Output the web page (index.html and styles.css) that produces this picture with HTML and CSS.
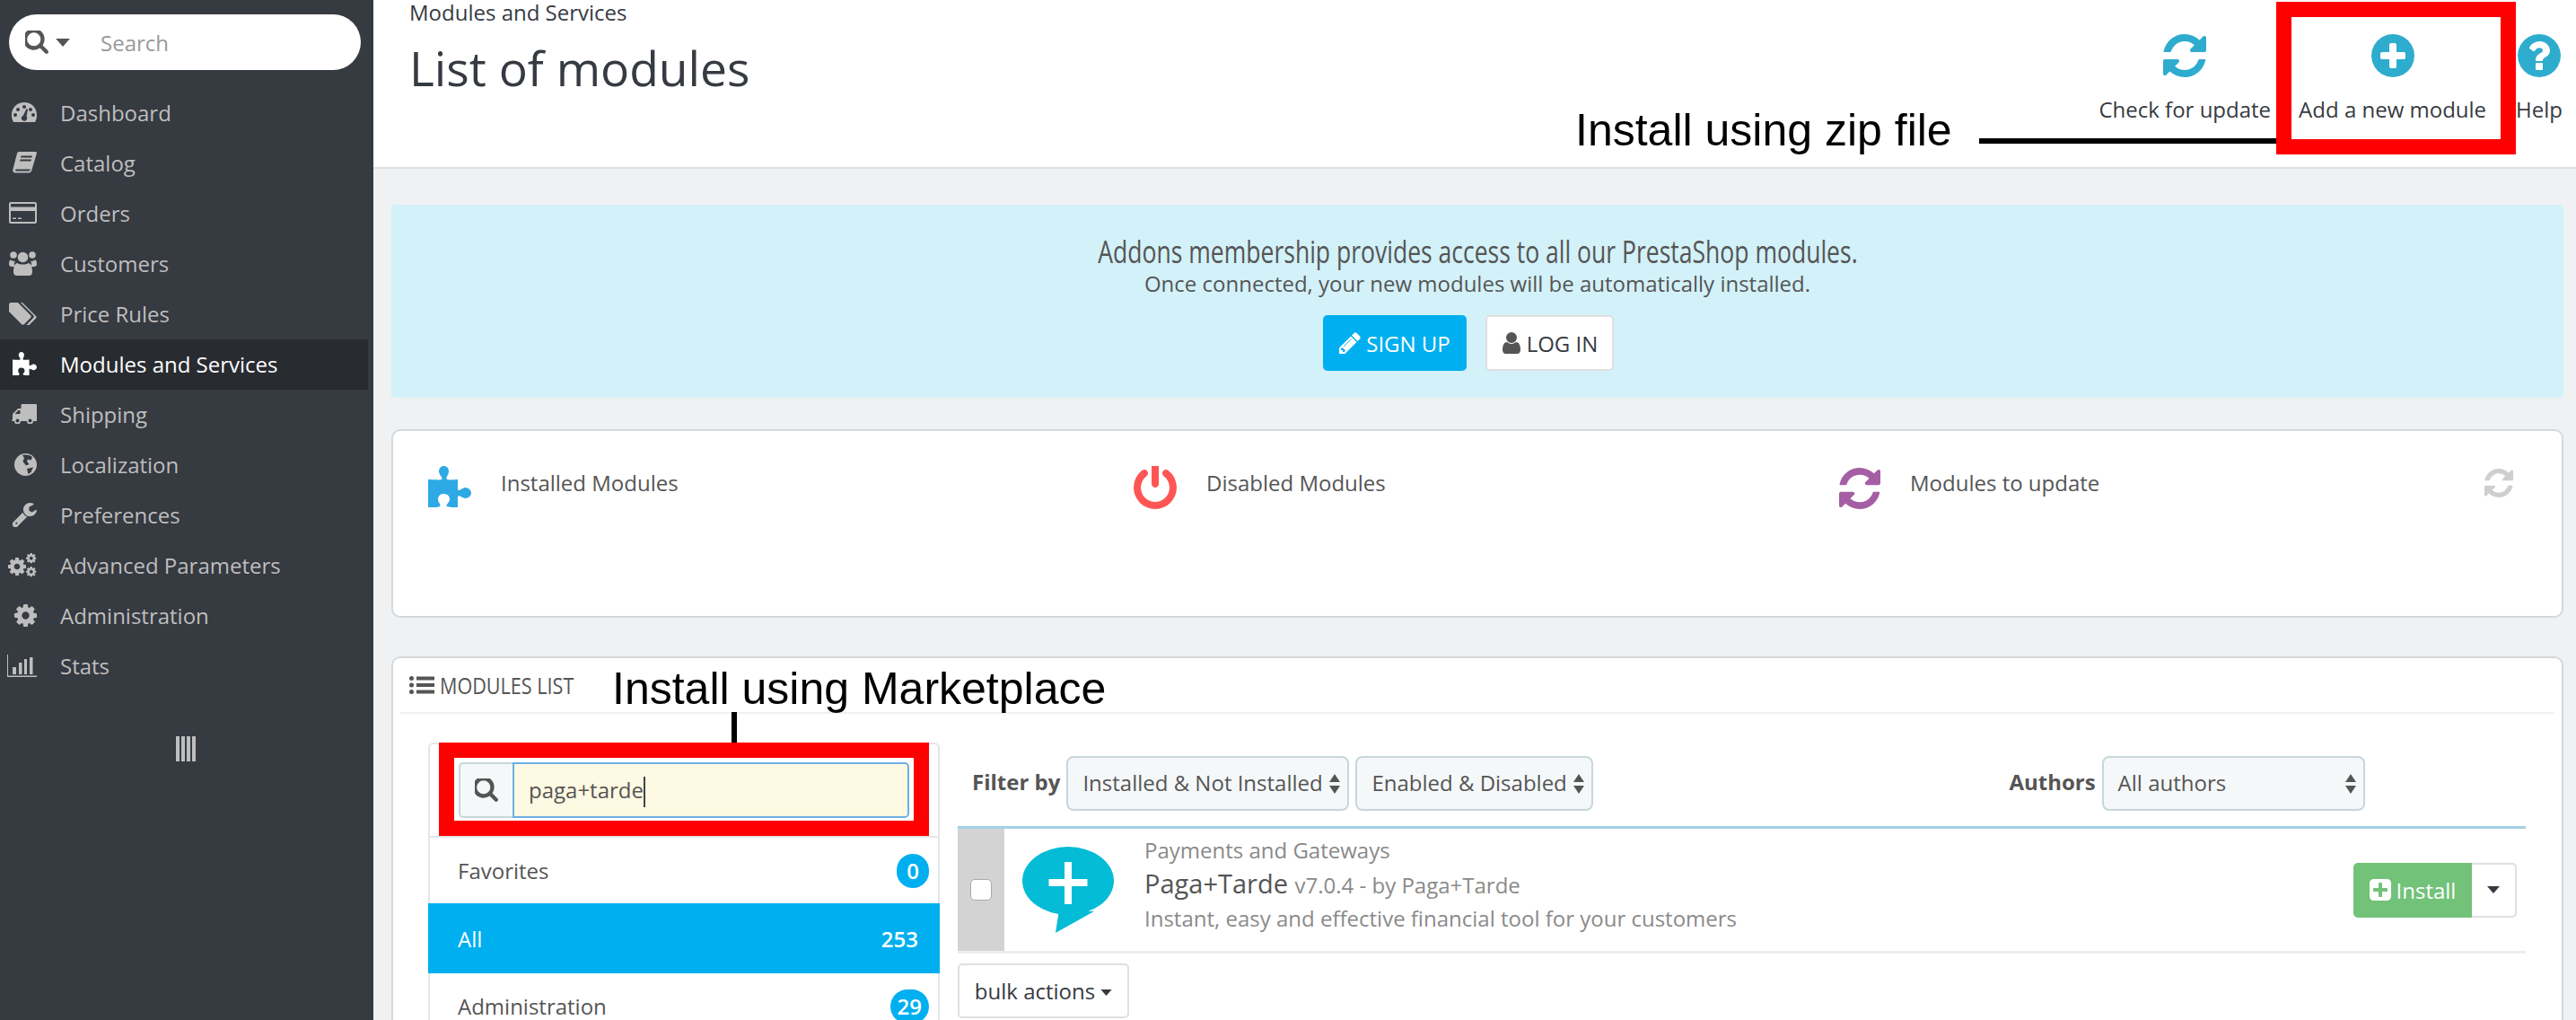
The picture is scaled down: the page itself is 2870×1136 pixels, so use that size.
FILE: index.html
```html
<!DOCTYPE html>
<html lang="en">
<head>
<meta charset="utf-8">
<title>List of modules</title>
<link rel="stylesheet" href="styles.css">
</head>
<body>
<svg class="sprite" aria-hidden="true">
  <symbol id="search" viewBox="128 128 1536 1536"><path d="M1152 704q0-185-131.500-316.500t-316.500-131.500-316.500 131.500-131.500 316.500 131.500 316.500 316.500 131.500 316.500-131.500 131.500-316.500zm512 832q0 52-38 90t-90 38q-54 0-90-38l-343-342q-179 124-399 124-143 0-273.500-55.500t-225-150-150-225-55.500-273.500 55.500-273.500 150-225 225-150 273.500-55.500 273.500 55.500 225 150 150 225 55.500 273.500q0 220-124 399l343 343q37 37 37 90z" transform="translate(0 0)"/></symbol>
  <symbol id="refresh" viewBox="128 128 1536 1536"><path d="M1639 1056q0 5-1 7-64 268-268 434.500t-478 166.500q-146 0-282.500-55t-243.500-157l-129 129q-19 19-45 19t-45-19-19-45v-448q0-26 19-45t45-19h448q26 0 45 19t19 45-19 45l-137 137q71 66 161 102t187 36q134 0 250-65t186-179q11-17 53-117 8-23 30-23h192q13 0 22.500 9.500t9.500 22.500zm25-800v448q0 26-19 45t-45 19h-448q-26 0-45-19t-19-45 19-45l138-138q-148-137-349-137-134 0-250 65t-186 179q-11 17-53 117-8 23-30 23h-199q-13 0-22.500-9.500t-9.500-22.500v-7q65-268 270-434.500t480-166.500q146 0 284 55.500t245 156.500l130-129q19-19 45-19t45 19 19 45z"/></symbol>
  <symbol id="plus-circle" viewBox="128 128 1536 1536"><path d="M1344 960v-128q0-26-19-45t-45-19h-256v-256q0-26-19-45t-45-19h-128q-26 0-45 19t-19 45v256h-256q-26 0-45 19t-19 45v128q0 26 19 45t45 19h256v256q0 26 19 45t45 19h128q26 0 45-19t19-45v-256h256q26 0 45-19t19-45zm320-64q0 209-103 385.500t-279.500 279.500-385.500 103-385.500-103-279.500-279.500-103-385.500 103-385.500 279.500-279.500 385.500-103 385.500 103 279.500 279.500 103 385.500z"/></symbol>
  <symbol id="question" viewBox="128 128 1536 1536"><path d="M1024 1376v-192q0-14-9-23t-23-9h-192q-14 0-23 9t-9 23v192q0 14 9 23t23 9h192q14 0 23-9t9-23zm256-672q0-88-55.500-163t-138.500-116-170-41q-243 0-371 213-15 24 8 42l132 100q7 6 19 6 16 0 25-12 53-68 86-92 34-24 86-24 48 0 85.500 26t37.500 59q0 38-20 61t-68 45q-63 28-115.500 86.500t-52.500 125.500v36q0 14 9 23t23 9h192q14 0 23-9t9-23q0-19 21.500-49.500t54.500-49.500q32-18 49-28.500t46-35 44.500-48 28-60.500 12.500-81zm384 192q0 209-103 385.500t-279.500 279.500-385.500 103-385.500-103-279.500-279.500-103-385.500 103-385.500 279.500-279.500 385.500-103 385.500 103 279.500 279.500 103 385.500z"/></symbol>
  <symbol id="puzzle" viewBox="0 0 48 46"><path d="M0 15C6 15 12 16 15 15C17 13 12 10 12 6C12 2 15 0 17.500 0C20 0 23 2 23 6C23 10 19 13 21 15C24 16 29 15 33 15V26C34 29 37 25 41 24C45 24 48 27 48 30C48 33 45 36 41 36C37 35 34 32 33 34V46C28 46 24 46 21 45C19 43 24 41 24 37C24 33 21 31 17 31C13 31 11 34 11 37C11 41 15 43 13 45C9 47 4 46 0 46Z"/></symbol>
  <symbol id="cog" viewBox="128 128 1536 1536"><path d="M1152 896q0-106-75-181t-181-75-181 75-75 181 75 181 181 75 181-75 75-181zm512-109v222q0 12-8 23t-20 13l-185 28q-19 54-39 91 35 50 107 138 10 12 10 25t-9 23q-27 37-99 108t-94 71q-12 0-26-9l-138-108q-44 23-91 38-16 136-29 186-7 28-36 28h-222q-14 0-24.500-8.500t-11.500-21.500l-28-184q-49-16-90-37l-141 107q-10 9-25 9-14 0-25-11-126-114-165-168-7-10-7-23 0-12 8-23 15-21 51-66.500t54-70.500q-27-50-41-99l-183-27q-13-2-21-12.500t-8-23.500v-222q0-12 8-23t19-13l186-28q14-46 39-92-40-57-107-138-10-12-10-24 0-10 9-23 26-36 98.500-107.500t94.500-71.500q13 0 26 10l138 107q44-23 91-38 16-136 29-186 7-28 36-28h222q14 0 24.500 8.500t11.500 21.500l28 184q49 16 90 37l142-107q9-9 24-9 13 0 25 10 129 119 165 170 7 8 7 22 0 12-8 23-15 21-51 66.500t-54 70.500q26 50 41 98l183 28q13 2 21 12.500t8 23.500z"/></symbol>
  <symbol id="cogs" viewBox="0 0 32 27"><use href="#cog" x="0" y="5" width="20" height="20"/><use href="#cog" x="20" y="0" width="11.500" height="11.500"/><use href="#cog" x="20" y="15" width="11.500" height="11.500"/></symbol>
  <symbol id="user" viewBox="256 128 1280 1536"><path d="M1536 1399q0 109-62.500 187t-150.500 78h-854q-88 0-150.500-78t-62.500-187q0-85 8.500-160.500t31.500-152 58.500-131 94-89 134.500-34.500q131 128 313 128t313-128q76 0 134.500 34.500t94 89 58.500 131 31.500 152 8.500 160.500zm-256-887q0 159-112.500 271.500t-271.500 112.500-271.500-112.500-112.500-271.500 112.500-271.500 271.500-112.500 271.500 112.500 112.500 271.500z"/></symbol>
  <symbol id="power" viewBox="128 128 1536 1536"><path d="M1664 896q0 156-61 298t-164 245-245 164-298 61-298-61-245-164-164-245-61-298q0-182 80.500-343t226.500-270q43-32 95.500-25t83.500 50q32 42 24.500 94.500t-49.500 84.500q-98 74-151.500 181t-53.500 228q0 104 40.500 198.500t109.500 163.500 163.500 109.500 198.500 40.500 198.500-40.500 163.500-109.500 109.500-163.500 40.500-198.500q0-121-53.500-228t-151.500-181q-42-32-49.500-84.500t24.500-94.500q31-43 84-50t95 25q146 109 226.500 270t80.500 343zm-640-768v640q0 52-38 90t-90 38-90-38-38-90v-640q0-52 38-90t90-38 90 38 38 90z"/></symbol>
  <symbol id="wrench" viewBox="128 128 1600 1600"><path d="M448 1472q0-26-19-45t-45-19-45 19-19 45 19 45 45 19 45-19 19-45zm644-420l-682 682q-37 37-90 37-52 0-91-37l-106-108q-38-36-38-90 0-53 38-91l681-681q39 98 114.500 173.500t173.500 114.500zm634-435q0 39-23 106-47 134-164.500 217.500t-258.500 83.500q-185 0-316.500-131.500t-131.500-316.500 131.500-316.500 316.500-131.500q58 0 121.500 16.500t107.500 46.500q16 11 16 28t-16 28l-293 169v224l193 107q5-3 79-48.500t135.500-81 70.500-35.500q15 0 23.500 10t8.500 25z"/></symbol>
  <symbol id="pencil" viewBox="128 128 1536 1536"><path d="M491 1536l91-91-235-235-91 91v107h128v128h107zm523-928q0-22-22-22-10 0-17 7l-542 542q-7 7-7 17 0 22 22 22 10 0 17-7l542-542q7-7 7-17zm-54-192l416 416-832 832h-416v-416zm683 96q0 53-37 90l-166 166-416-416 166-165q36-38 90-38 53 0 91 38l235 234q37 39 37 91z"/></symbol>
  <symbol id="plus-square" viewBox="128 128 1536 1536"><path d="M1408 960v-128q0-26-19-45t-45-19h-320v-320q0-26-19-45t-45-19h-128q-26 0-45 19t-19 45v320h-320q-26 0-45 19t-19 45v128q0 26 19 45t45 19h320v320q0 26 19 45t45 19h128q26 0 45-19t19-45v-320h320q26 0 45-19t19-45zm256-544v960q0 119-84.500 203.500t-203.500 84.500h-960q-119 0-203.500-84.500t-84.500-203.500v-960q0-119 84.500-203.500t203.500-84.500h960q119 0 203.500 84.500t84.500 203.500z"/></symbol>
  <symbol id="users" viewBox="0 0 31 28"><circle cx="5" cy="5" r="3.800"/><circle cx="26" cy="5" r="3.800"/><circle cx="15.500" cy="7.500" r="5.800"/><path d="M7 12C5 15 6 17 7 18H3C1 18 0 17 0 15C0 12 1 10 2 10.500C4 12 5.500 12 7 12ZM24 12C25.500 12 27 12 29 10.500C30 10 31 12 31 15C31 17 30 18 28 18H24C25 17 26 15 24 12ZM9.500 14C12 16 19 16 21.500 14C24.500 14 26 18 26 24C26 27 24 28 22 28H9C7 28 5 27 5 24C5 18 6.500 14 9.500 14Z"/></symbol>
  <symbol id="dash" viewBox="0 0 28 22"><path fill-rule="evenodd" d="M14 0C22 0 28 6 28 14C28 17 27.500 19.500 26 22H2C.5 19.500 0 17 0 14C0 6 6 0 14 0ZM14 3A2 2 0 1 0 14 7A2 2 0 1 0 14 3ZM7 6A2 2 0 1 0 7 10A2 2 0 1 0 7 6ZM21 6A2 2 0 1 0 21 10A2 2 0 1 0 21 6ZM4 12A2 2 0 1 0 4 16A2 2 0 1 0 4 12ZM24 12A2 2 0 1 0 24 16A2 2 0 1 0 24 12ZM16.500 7L13 14.500A3.200 3.200 0 1 0 16.500 15.500L18 8Z"/></symbol>
  <symbol id="book" viewBox="0 0 27 24"><path fill-rule="evenodd" d="M7 0H26C27 0 27 1 26.800 2L21.500 20C21 22 20 23.500 18 23.500H3C1 23.500 0 22 .3 20C1 18 3 9 5 2C5.300 1 6 0 7 0ZM9.500 4.500L9 6.500H21.500L22 4.500ZM8.500 8.500L8 10.500H20.500L21 8.500ZM4 19.500C3 19.500 2.700 21.500 4 21.500H18C19 21.500 19.500 20.500 20 19.500Z"/></symbol>
  <symbol id="card" viewBox="0 0 31 24"><path fill-rule="evenodd" d="M2 0H29C30 0 31 1 31 2V22C31 23 30 24 29 24H2C1 24 0 23 0 22V2C0 1 1 0 2 0ZM2 5.500H29V2H2ZM2 10V22H29V10ZM4 17.500H8V19H4ZM10 17.500H14V19H10Z"/></symbol>
  <symbol id="tags" viewBox="0 0 31 25"><path d="M0 2C0 1 1 0 2 0H10L24 14C25 15 25 16 24 17L17 24C16 25 15 25 14 24L0 10ZM13 0H15L29.500 14.500C31 16 31 16.500 29.500 18L22.500 25H19.500L27 17C28 16 28 15 27 14Z"/></symbol>
  <symbol id="truck" viewBox="0 0 28 22"><path d="M27 0H12C11 0 10.500 .5 10.500 1.500V5H7L1 11V17C0 17 0 19 1 19H3A3.500 3.500 0 0 0 10 19H17A3.500 3.500 0 0 0 24 19H27C27.700 19 28 18.500 28 18V1C28 .5 27.700 0 27 0Z"/><circle cx="6.500" cy="18.500" r="2" fill="#363a41"/><circle cx="20.500" cy="18.500" r="2" fill="#363a41"/><path d="M3.500 11L7.500 7H9.500V11Z" fill="#363a41"/></symbol>
  <symbol id="globe" viewBox="0 0 25 25"><circle cx="12.500" cy="12.500" r="12.500"/><path fill="#363a41" d="M9 2C12 1 17 1.500 20 4L18.500 7.500L15 6.500L14 9L16.500 12L13 13.500L9.500 9L11 5ZM14 17L21 15.500L18.500 21L15.500 23Z"/></symbol>
  <symbol id="chart" viewBox="0 0 33 25"><path d="M0 0H1V23.500H33V25H0ZM6 14H10V22H6ZM13 9H16.500V22H13ZM19 5H22V22H19ZM25 3H28.500V22H25Z"/></symbol>
  <symbol id="list" viewBox="0 0 28 20"><circle cx="2.500" cy="2.500" r="2.500"/><circle cx="2.500" cy="10" r="2.500"/><circle cx="2.500" cy="17.500" r="2.500"/><path d="M8 .5H28V4.500H8ZM8 8H28V12H8ZM8 15.500H28V19.500H8Z"/></symbol>
  <symbol id="sort" viewBox="0 0 12 22"><path d="M6 0L12 9H0ZM0 13H12L6 22Z"/></symbol>
  <symbol id="caret" viewBox="0 0 14 8"><path d="M0 0H14L7 8Z"/></symbol>
  <symbol id="bubble" viewBox="0 0 102 96"><ellipse cx="51" cy="38" rx="51" ry="38"/><path d="M41 70L37 96L80 72Z"/><path fill="#fff" d="M47 17H55V36H72.500V44H55V64H47V44H29.500V36H47Z"/></symbol>
</svg>

<div class="app">
  <aside class="sidebar">
    <div class="search">
      <svg class="search-ico"><use href="#search"/></svg>
      <svg class="search-caret"><use href="#caret"/></svg>
      <span class="search-text">Search</span>
    </div>
    <nav class="menu">
      <a class="item"><span class="ibox"><svg class="i-dash"><use href="#dash"/></svg></span>Dashboard</a>
      <a class="item"><span class="ibox"><svg class="i-book"><use href="#book"/></svg></span>Catalog</a>
      <a class="item"><span class="ibox"><svg class="i-card"><use href="#card"/></svg></span>Orders</a>
      <a class="item"><span class="ibox"><svg class="i-users"><use href="#users"/></svg></span>Customers</a>
      <a class="item"><span class="ibox"><svg class="i-tags"><use href="#tags"/></svg></span>Price Rules</a>
      <a class="item active"><span class="ibox"><svg class="i-puzzle"><use href="#puzzle"/></svg></span>Modules and Services</a>
      <a class="item"><span class="ibox"><svg class="i-truck"><use href="#truck"/></svg></span>Shipping</a>
      <a class="item"><span class="ibox"><svg class="i-globe"><use href="#globe"/></svg></span>Localization</a>
      <a class="item"><span class="ibox"><svg class="i-wrench"><use href="#wrench"/></svg></span>Preferences</a>
      <a class="item"><span class="ibox"><svg class="i-cogs"><use href="#cogs"/></svg></span>Advanced Parameters</a>
      <a class="item"><span class="ibox"><svg class="i-cog"><use href="#cog"/></svg></span>Administration</a>
      <a class="item"><span class="ibox"><svg class="i-chart"><use href="#chart"/></svg></span>Stats</a>
    </nav>
    <div class="collapse"><i></i><i></i><i></i><i></i></div>
  </aside>

  <main class="main">
    <header class="header">
      <div class="titles">
        <div class="crumb">Modules and Services</div>
        <h1 class="title">List of modules</h1>
      </div>
      <div class="toolbar">
        <div class="tool"><svg class="tool-ico"><use href="#refresh"/></svg><span>Check for update</span></div>
        <div class="tool tool-add"><svg class="tool-ico"><use href="#plus-circle"/></svg><span>Add a new module</span></div>
        <div class="tool"><svg class="tool-ico"><use href="#question"/></svg><span>Help</span></div>
      </div>
    </header>

    <div class="content">
      <section class="alert">
        <h2 class="alert-title"><span>Addons membership provides access to all our PrestaShop modules.</span></h2>
        <p class="alert-sub">Once connected, your new modules will be automatically installed.</p>
        <div class="alert-btns">
          <a class="btn btn-blue"><svg class="btn-ico"><use href="#pencil"/></svg>SIGN UP</a>
          <a class="btn btn-white"><svg class="btn-ico-user"><use href="#user"/></svg>LOG IN</a>
        </div>
      </section>

      <section class="card stats">
        <div class="stat"><svg class="stat-puzzle"><use href="#puzzle"/></svg><span>Installed Modules</span></div>
        <div class="stat"><svg class="stat-power"><use href="#power"/></svg><span>Disabled Modules</span></div>
        <div class="stat"><svg class="stat-update"><use href="#refresh"/></svg><span>Modules to update</span></div>
        <svg class="stat-reload"><use href="#refresh"/></svg>
      </section>

      <section class="card modules">
        <div class="panel-head"><svg class="list-ico"><use href="#list"/></svg><span class="panel-text">MODULES LIST</span></div>
        <div class="panel-body">
          <div class="cats">
            <div class="cat-search">
              <div class="addon"><svg class="addon-ico"><use href="#search"/></svg></div>
              <div class="field">paga+tarde<span class="cursor"></span></div>
            </div>
            <div class="cat"><span>Favorites</span><b class="badge">0</b></div>
            <div class="cat cat-on"><span>All</span><b class="count">253</b></div>
            <div class="cat cat-admin"><span>Administration</span><b class="badge">29</b></div>
          </div>
          <div class="list">
            <div class="filters">
              <label class="flabel">Filter by</label>
              <div class="select s1">Installed &amp; Not Installed<svg class="sort"><use href="#sort"/></svg></div>
              <div class="select s2">Enabled &amp; Disabled<svg class="sort"><use href="#sort"/></svg></div>
              <label class="flabel authors">Authors</label>
              <div class="select s3">All authors<svg class="sort"><use href="#sort"/></svg></div>
            </div>
            <div class="row">
              <div class="check"><span class="box"></span></div>
              <svg class="logo"><use href="#bubble"/></svg>
              <div class="info">
                <div class="info-cat">Payments and Gateways</div>
                <div class="info-name">Paga+Tarde <small>v7.0.4 - by Paga+Tarde</small></div>
                <div class="info-desc">Instant, easy and effective financial tool for your customers</div>
              </div>
              <div class="actions">
                <a class="install"><svg class="install-ico"><use href="#plus-square"/></svg>Install</a>
                <a class="more"><svg class="more-caret"><use href="#caret"/></svg></a>
              </div>
            </div>
            <a class="bulk">bulk actions<svg class="bulk-caret"><use href="#caret"/></svg></a>
          </div>
        </div>
      </section>
    </div>
  </main>
</div>

<div class="redbox box-zip"></div>
<div class="redbox box-market"></div>
<div class="note note-zip">Install using zip file</div>
<div class="note note-market">Install using Marketplace</div>
<div class="leader leader-zip"></div>
<div class="leader leader-market"></div>
</body>
</html>
```
FILE: styles.css
```css
* { box-sizing: border-box; }
html, body { margin: 0; height: 1136px; overflow: hidden; }
body { font-family: "Open Sans", sans-serif; font-size: 24px; color: #555; background: #eff1f3; position: relative; }
.sprite { position: absolute; width: 0; height: 0; }
svg { fill: currentColor; display: block; flex: none; }
.app { display: flex; height: 1136px; }

/* sidebar */
.sidebar { width: 416px; flex: none; background: #363a41; padding-top: 16px; color: #bebebe; }
.search { width: 392px; height: 62px; margin-left: 10px; background: #fff; border-radius: 31px; display: flex; align-items: center; color: #555; }
.search-ico { width: 26px; height: 26px; margin-left: 18px; }
.search-caret { width: 16px; height: 9px; margin-left: 8px; }
.search-text { margin-left: 34px; color: #999; }
.menu { margin-top: 20px; }
.item { display: flex; align-items: center; height: 56px; padding-bottom: 2px; color: #bebebe; }
.item.active { background: #282b30; color: #fff; width: 410px; font-weight: 500; }
.ibox { width: 41px; margin-right: 26px; display: flex; justify-content: flex-end; }
.i-dash { width: 28px; height: 22px; }
.i-book { width: 27px; height: 24px; }
.i-card { width: 31px; height: 24px; }
.i-users { width: 31px; height: 28px; }
.i-tags { width: 31px; height: 25px; }
.i-puzzle { width: 27px; height: 26px; }
.i-truck { width: 28px; height: 22px; }
.i-globe { width: 25px; height: 25px; }
.i-wrench { width: 27px; height: 27px; }
.i-cogs { width: 32px; height: 27px; }
.i-cog { width: 25px; height: 25px; }
.i-chart { width: 33px; height: 25px; }
.collapse { display: flex; gap: 2px; justify-content: center; margin: 50px 2px 0 0; }
.collapse i { width: 4px; height: 28px; background: #bebebe; }

/* header */
.main { flex: 1; min-width: 0; }
.header { height: 188px; background: #fff; border-bottom: 2px solid #dfe2e5; display: flex; justify-content: space-between; padding: 0 15px 0 40px; }
.crumb { color: #363a41; line-height: 28px; }
.title { margin: 16px 0 0; font-size: 53.4px; font-weight: 400; line-height: 64px; color: #363a41; }
.toolbar { display: flex; gap: 32px; padding-top: 38px; color: #363a41; }
.tool { display: flex; flex-direction: column; align-items: center; }
.tool-add { position: relative; left: -1px; }
.tool-ico { width: 48px; height: 48px; color: #2eacce; margin-bottom: 19px; }

/* content */
.content { padding: 40px 14px 0 20px; }
.alert { height: 215px; background: #d3f1f8; border-radius: 4px; text-align: center; padding-top: 32px; }
.alert-title { margin: 0; font-size: 34px; font-weight: 500; line-height: 40px; color: #555; }
.alert-title span { display: inline-block; transform: scaleX(.78); }
.alert-sub { margin: 0; line-height: 32px; }
.alert-btns { display: flex; justify-content: center; gap: 21px; margin-top: 19px; padding-right: 20px; }
.btn { height: 62px; display: flex; align-items: center; justify-content: center; border-radius: 5px; }
.btn-blue { width: 160px; background: #00aff0; color: #fff; }
.btn-white { width: 143px; background: #fff; border: 2px solid #dfdfdf; color: #363a41; }
.btn-ico { width: 24px; height: 24px; margin-right: 6px; }
.btn-ico-user { width: 22px; height: 24px; margin-right: 6px; color: #555; }

.card { background: #fff; border: 2px solid #d3d8db; border-radius: 10px; }
.stats { margin-top: 35px; height: 210px; display: flex; padding: 39px 0 0 39px; position: relative; }
.stat { width: 786px; display: flex; gap: 33px; align-items: flex-start; line-height: 36px; }
.stat span { margin-top: 1px; }
.stat-puzzle { width: 48px; height: 46px; color: #2ea9e6; }
.stat-power { width: 48px; height: 48px; color: #f55; }
.stat-update { width: 46px; height: 46px; color: #a55ea3; margin-top: 2px; }
.stat-reload { position: absolute; right: 54px; top: 42px; width: 32px; height: 32px; color: #cfcfcf; }

.modules { margin-top: 43px; height: 500px; }
.panel-head { height: 62px; margin: 0 8px; border-bottom: 2px solid #eff1f3; display: flex; align-items: center; font-size: 26px; font-weight: 500; color: #555; padding-left: 10px; }
.list-ico { width: 28px; height: 20px; margin-right: 6px; }
.panel-text { display: inline-block; transform: scaleX(.83); transform-origin: left center; }
.panel-body { display: flex; gap: 20px; padding: 32px 40px 0 39px; }

.cats { width: 570px; flex: none; border: 2px solid #e3e6e8; border-bottom: 0; border-radius: 6px 6px 0 0; }
.cat-search { height: 104px; display: flex; align-items: center; padding: 0 32px; border-bottom: 2px solid #e3e6e8; }
.addon { width: 60px; height: 62px; background: #f5f8f9; border: 2px solid #c7d6db; border-right: 0; border-radius: 5px 0 0 5px; display: flex; align-items: center; justify-content: center; color: #555; }
.addon-ico { width: 26px; height: 26px; }
.field { flex: 1; height: 62px; background: #fef9e2; border: 2px solid #6cb0e6; border-radius: 0 5px 5px 0; padding-left: 16px; line-height: 58px; color: #555; }
.cursor { display: inline-block; width: 2px; height: 34px; background: #444; vertical-align: middle; margin-top: -2px; }
.cat { display: flex; align-items: center; justify-content: space-between; height: 73px; padding: 0 10px 0 31px; }
.cat b { font-weight: 600; }
.badge { min-width: 36px; height: 38px; padding: 0 8px; border-radius: 19px; background: #00aff0; color: #fff; display: flex; align-items: center; justify-content: center; }
.cat-on { height: 78px; background: #00aff0; color: #fff; margin: 0 -2px; padding: 0 24px 0 33px; }
.count { color: #fff; }

.list { flex: 1; min-width: 0; }
.filters { height: 93px; display: flex; align-items: flex-start; padding: 15px 0 0 16px; }
.flabel { font-weight: 700; line-height: 58px; }
.select { height: 61px; background: #f5f8f9; border: 2px solid #c7d6db; border-radius: 8px; display: flex; align-items: center; justify-content: space-between; padding: 0 8px 3px 16px; color: #555; }
.s1 { width: 315px; margin-left: 7px; }
.s2 { width: 265px; margin-left: 7px; }
.authors { margin-left: 463px; }
.s3 { width: 293px; margin-left: 7px; }
.sort { width: 12px; height: 22px; margin-top: 3px; }
.row { height: 142px; border-top: 3px solid #a3d0e4; border-bottom: 3px solid #e9eef1; display: flex; align-items: center; }
.check { width: 52px; align-self: stretch; background: #d3d3d3; display: flex; align-items: center; justify-content: center; }
.box { width: 24px; height: 24px; background: #fff; border: 1px solid #aaa; border-radius: 5px; }
.logo { width: 102px; height: 96px; color: #04bcd6; margin-left: 20px; }
.info { margin: 0 0 14px 34px; flex: 1; }
.info-cat, .info-desc { color: #8a8a8a; line-height: 37px; }
.info-name { font-size: 29px; line-height: 37px; color: #555; }
.info-name small { font-size: 24px; color: #8a8a8a; }
.actions { display: flex; height: 61px; margin-right: 10px; }
.install { width: 132px; background: #72c279; color: #fff; border-radius: 5px 0 0 5px; display: flex; align-items: center; justify-content: center; }
.install-ico { width: 24px; height: 24px; margin-right: 6px; }
.more { width: 50px; border: 2px solid #dfdfdf; border-left: 0; border-radius: 0 5px 5px 0; display: flex; align-items: center; justify-content: center; color: #363a41; }
.more-caret { width: 14px; height: 8px; }
.bulk { width: 191px; height: 61px; margin-top: 11px; border: 2px solid #dfdfdf; border-radius: 5px; display: flex; align-items: center; justify-content: center; color: #363a41; }
.bulk-caret { width: 13px; height: 7px; margin-left: 6px; margin-top: 4px; }

/* annotations laid over the screenshot */
.redbox { position: absolute; border: 17px solid #f00; }
.box-zip { left: 2536px; top: 2px; width: 267px; height: 170px; }
.box-market { left: 489px; top: 827px; width: 546px; height: 104px; }
.note { position: absolute; font-family: "Liberation Sans", Arial, sans-serif; color: #000; font-size: 50px; line-height: 56px; white-space: nowrap; }
.note-zip { left: 1755px; top: 117px; }
.note-market { left: 682px; top: 739px; }
.leader { position: absolute; background: #000; }
.leader-zip { left: 2205px; top: 154px; width: 331px; height: 6px; }
.leader-market { left: 815px; top: 793px; width: 6px; height: 34px; }
```
